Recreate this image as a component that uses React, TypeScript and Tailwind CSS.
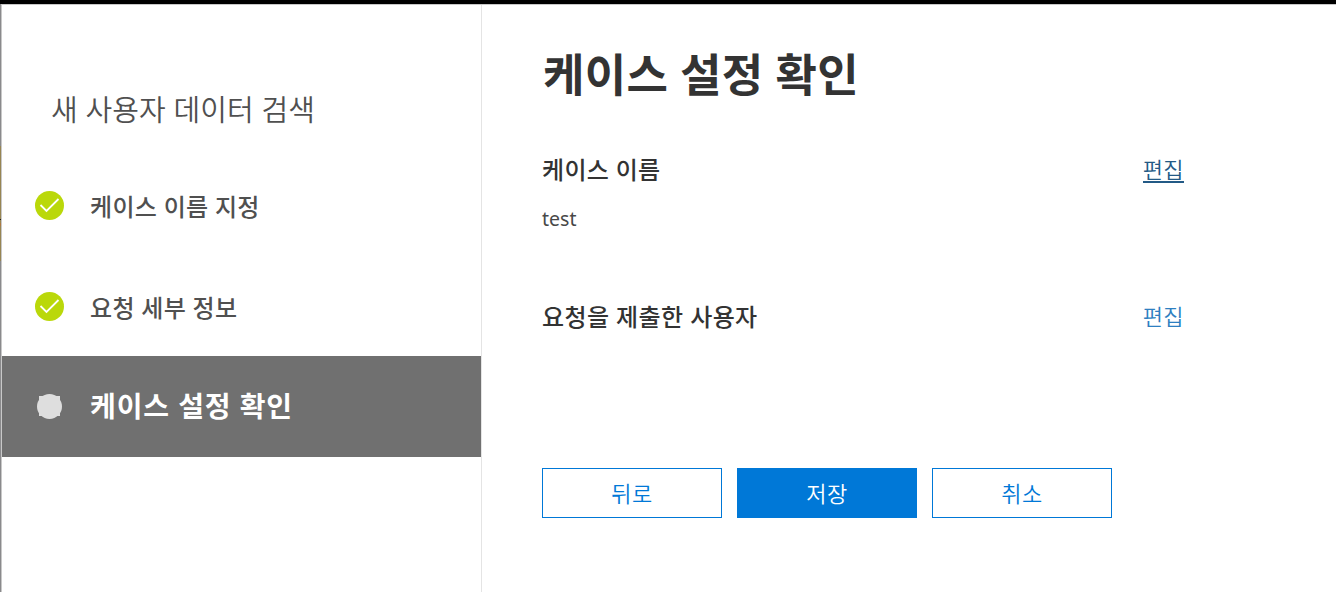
const steps = [
    { label: "케이스 이름 지정", done: true },
    { label: "요청 세부 정보", done: true },
    { label: "케이스 설정 확인", done: false }
]

const font = "font-['Noto_Sans','Noto_Sans_CJK_KR',sans-serif]"

function StepIcon({ done }: { done: boolean }) {
    if (!done) {
        return (
            <svg viewBox="0 0 29 29" className="h-[29px] w-[29px] shrink-0">
                <circle cx="14.5" cy="14.5" r="12.5" fill="#dedede" />
                <rect x="4" y="4" width="21" height="20" fill="#dedede" />
            </svg>
        )
    }
    return (
        <svg viewBox="0 0 29 29" className="mt-px h-[29px] w-[29px] shrink-0">
            <circle cx="14.5" cy="14.5" r="14.5" fill="#bad80a" />
            <path d="M5.5 14l6 6L23.5 8" fill="none" stroke="white" strokeWidth="1.8" />
        </svg>
    )
}

export default function App() {
    return (
        <div className={`flex h-[592px] w-[1336px] flex-col overflow-hidden bg-white ${font}`}>
            <div className="h-1 shrink-0 bg-black" />
            <div className="flex flex-1">
                {/* Sliver of the window behind the panel */}
                <div className="flex w-px shrink-0 flex-col bg-[#8a8a8c]">
                    <div className="mt-[142px] h-[73px] bg-[#978552]" />
                    <div className="h-px bg-[#201c14]" />
                    <div className="h-[3px] bg-[#978552]" />
                    <div className="h-[3px] bg-[#b07840]" />
                    <div className="h-[35px] bg-[#978552]" />
                </div>
                <div className="flex flex-1 border-t border-l border-[#c8c8c8]">
                    <aside className="w-[480px] shrink-0 border-r border-[#e4e4e4]">
                        <h2 className="mt-[85px] ml-[49px] h-10 text-[29px] leading-10 font-[350] tracking-[0.1px] whitespace-nowrap text-[#505050]">
                            새 사용자 데이터 검색
                        </h2>
                        <ul className="mt-[24px]">
                            {steps.map((step) => (
                                <li
                                    key={step.label}
                                    className={`flex h-[101px] items-center gap-[26px] pl-[33px] whitespace-nowrap ${step.done ? "text-[24px] font-medium tracking-[0.3px] text-[#505050]" : "bg-[#707070] text-[28px] font-bold tracking-[0.9px] text-white"}`}
                                >
                                    <StepIcon done={step.done} />
                                    <span className={step.done ? "pt-[5px]" : "pb-0.5"}>{step.label}</span>
                                </li>
                            ))}
                        </ul>
                    </aside>

                    <main className="flex-1 pl-[60px] text-[#333]">
                        <h1 className="mt-[40px] h-[60px] pl-px text-[45px] leading-[60px] font-bold tracking-[0.3px]">
                            케이스 설정 확인
                        </h1>
                        <section className="mt-[48px] flex h-8 w-[642px] items-center justify-between">
                            <h3 className="pt-0.5 text-[24px] font-medium tracking-[0.3px]">케이스 이름</h3>
                            <a className="h-[28px] border-b-2 border-[#235a86] text-[22px] leading-[28px] font-[350] tracking-[0.4px] text-[#235a86]">
                                편집
                            </a>
                        </section>
                        <p className="mt-[19px] h-[30px] text-[19.5px] leading-[30px] text-[#484848]">test</p>
                        <section className="mt-[66px] flex h-8 w-[642px] items-center justify-between">
                            <h3 className="pt-0.5 text-[24px] font-medium tracking-[0.4px]">요청을 제출한 사용자</h3>
                            <a className="text-[22px] font-[350] tracking-[0.4px] text-[#2e7fc1]">편집</a>
                        </section>
                        <div className="mt-[136px] flex gap-[15px] text-[22px] font-[350] tracking-[0.4px]">
                            <button className="h-[50px] w-[180px] border border-[#0078d7] text-[#0078d7]">뒤로</button>
                            <button className="h-[50px] w-[180px] bg-[#0078d7] text-white">저장</button>
                            <button className="h-[50px] w-[180px] border border-[#0078d7] text-[#0078d7]">취소</button>
                        </div>
                    </main>
                </div>
            </div>
        </div>
    )
}
